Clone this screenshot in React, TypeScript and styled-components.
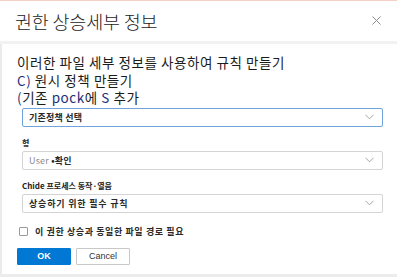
import React from 'react';
import styled, { createGlobalStyle } from 'styled-components';

const GlobalStyle = createGlobalStyle`
  html, body {
    margin: 0;
    padding: 0;
    background: #ffffff;
  }
  body {
    font-family: "Noto Sans CJK KR", "Noto Sans", sans-serif;
    color: #1b1b1b;
  }
`;

const Chevron = () => (
  <svg width='9' height='6' viewBox='0 0 9 6'>
    <path d='M0.5 0.8 L4.5 4.8 L8.5 0.8' fill='none' stroke='#9a9a9a' strokeWidth='0.9' />
  </svg>
);

const CloseIcon = () => (
  <svg width='9' height='9' viewBox='0 0 9 9'>
    <path d='M0.5 0.5 L8.5 8.5 M8.5 0.5 L0.5 8.5' stroke='#8a8a8a' strokeWidth='1' />
  </svg>
);

const App = () => {
  return (
    <>
      <GlobalStyle />
      <Frame>
        <Header>
          <Title>권한 상승세부 정보</Title>
          <CloseButton>
            <CloseIcon />
          </CloseButton>
        </Header>
        <Divider />
        <Content>
          <Intro>
            <Line>이러한 파일 세부 정보를 사용하여 규칙 만들기</Line>
            <Line>
              <Accent>C)</Accent> 원시 정책 만들기
            </Line>
            <Line>
              <Accent>(</Accent>기존 <Accent>pock</Accent>에 <Accent>S</Accent> 추가
            </Line>
          </Intro>
          <Select $focused>
            <SelectText>기존정책 선택</SelectText>
            <Chevron />
          </Select>
          <Label>형</Label>
          <Select>
            <SelectText>
              <Muted>User</Muted> •확인
            </SelectText>
            <Chevron />
          </Select>
          <Label>Chide 프로세스 동작·열음</Label>
          <Select>
            <SelectText $spaced>상승하기 위한 필수 규칙</SelectText>
            <Chevron />
          </Select>
          <CheckRow>
            <Box />
            <CheckText>이 권한 상승과 동일한 파일 경로 필요</CheckText>
          </CheckRow>
          <Buttons>
            <Button $primary>OK</Button>
            <Button>Cancel</Button>
          </Buttons>
        </Content>
        <Footer />
      </Frame>
    </>
  );
};

export default App;

const Frame = styled.div`
  width: 397px;
  height: 277px;
  display: flex;
  flex-direction: column;
  border-top: 1px solid #f3cfc6;
  box-sizing: border-box;
  overflow: hidden;
`;

const Header = styled.div`
  height: 40px;
  display: flex;
  align-items: center;
  justify-content: space-between;
  padding: 0 16px 0 15px;
`;

const Title = styled.h1`
  margin: 0;
  font-size: 18.5px;
  font-weight: 300;
  color: #222;
  letter-spacing: -0.2px;
`;

const CloseButton = styled.div`
  display: flex;
  margin-top: -2px;
`;

const Divider = styled.div`
  height: 3px;
  background: #f2f2f2;
`;

const Content = styled.div`
  flex: 1;
  display: flex;
  flex-direction: column;
  border-left: 2px solid #ebebeb;
  padding: 10px 14px 0 15px;
`;

const Intro = styled.div`
  display: flex;
  flex-direction: column;
  margin-bottom: 1px;
`;

const Line = styled.div`
  height: 17.5px;
  font-size: 13.5px;
  line-height: 17.5px;
  color: #1b1b1b;
  white-space: nowrap;
  letter-spacing: 0.55px;
`;

const Accent = styled.span`
  color: #1d2f7a;
`;

const Select = styled.div<{ $focused?: boolean }>`
  height: 17px;
  margin-left: 5px;
  display: flex;
  align-items: center;
  justify-content: space-between;
  padding: 0 8px 0 6px;
  border: 1px solid ${(p) => (p.$focused ? '#6fa3dc' : '#d4d4d4')};
  border-radius: 2px;
  background: #fff;
`;

const SelectText = styled.span<{ $spaced?: boolean }>`
  font-size: 9px;
  font-weight: 700;
  color: #2a2a2a;
  letter-spacing: ${(p) => (p.$spaced ? '0.8px' : '0.2px')};
`;

const Muted = styled.span`
  color: #8a8a8a;
  font-weight: 400;
`;

const Label = styled.div`
  margin: 11px 0 3px 5px;
  font-size: 8px;
  font-weight: 700;
  color: #222;
  line-height: 10px;
`;

const CheckRow = styled.div`
  display: flex;
  align-items: center;
  gap: 7px;
  margin-top: 12px;
`;

const Box = styled.div`
  width: 7px;
  height: 7px;
  border: 1px solid #9a9a9a;
  border-radius: 1px;
  margin-left: 2px;
`;

const CheckText = styled.span`
  font-size: 9px;
  font-weight: 700;
  color: #2a2a2a;
  letter-spacing: 0.6px;
`;

const Buttons = styled.div`
  display: flex;
  gap: 5px;
  margin-top: 10px;
`;

const Button = styled.button<{ $primary?: boolean }>`
  width: 54px;
  height: 17px;
  padding: 0;
  border-radius: 1px;
  border: 1px solid ${(p) => (p.$primary ? '#0078d4' : '#c8c8c8')};
  background: ${(p) => (p.$primary ? '#0078d4' : '#ffffff')};
  color: ${(p) => (p.$primary ? '#ffffff' : '#333333')};
  font-family: "Liberation Sans", Arial, sans-serif;
  font-size: 9px;
  font-weight: ${(p) => (p.$primary ? 700 : 400)};
`;

const Footer = styled.div`
  height: 3px;
  background: #ececec;
`;
